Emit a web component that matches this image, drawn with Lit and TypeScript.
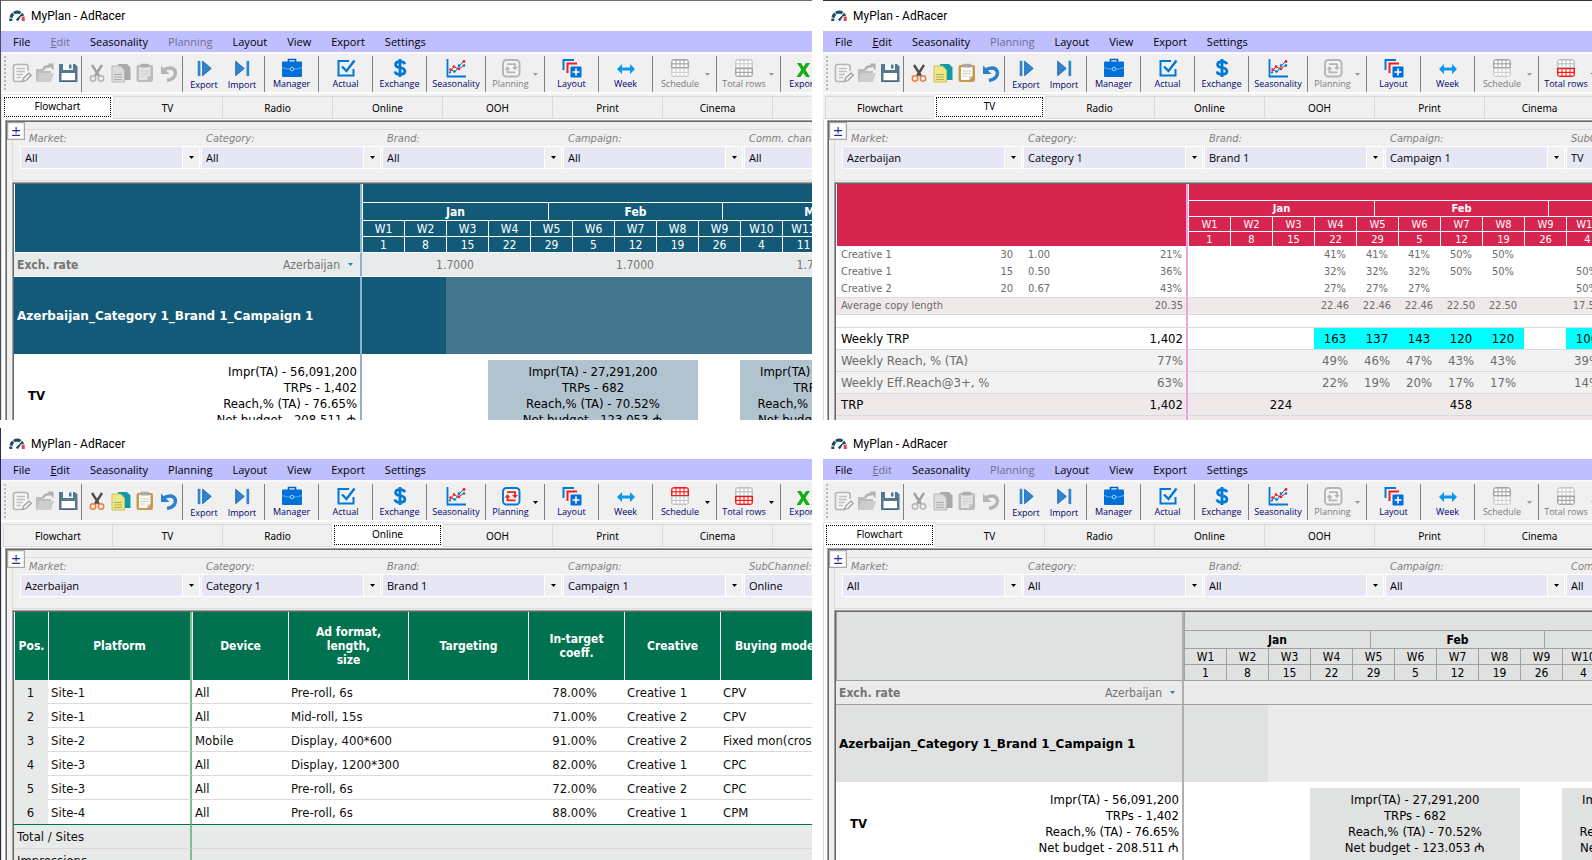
import { LitElement, html, svg, css, nothing } from "lit";
import { customElement, property } from "lit/decorators.js";
import { classMap } from "lit/directives/class-map.js";

type Grid = "flow" | "tv" | "online";

const icon = (body: unknown, size = 20) =>
  html`<svg class="ico" width=${size} height=${size} viewBox="0 0 20 20" aria-hidden="true">${body}</svg>`;

const BLUE = "#0078d7";
const RED = "#f41c1c";

const logo = html`<svg width="16" height="12" viewBox="0 0 16 12" aria-hidden="true">
  <path d="M1.800 11V8.500M2 7.600Q2.500 5.300 4.200 3.700M4.900 3.100Q6.200 2.100 8 2Q10 2 11.500 3.100M12.200 3.800Q13.200 4.700 13.700 6" fill="none" stroke="#1c4a60" stroke-width="3"/>
  <path d="M14 6.600Q14.400 8.300 14.300 11" fill="none" stroke="#e8404c" stroke-width="3"/>
  <path d="M7.300 9.600L12 5L9 10.600Z" fill="#1c4a60" stroke="#1c4a60" stroke-width="1"/>
</svg>`;

const gridGlyph = (top: string, bottom: string) => svg`
  <path d="M1 4.500Q1 1 4.500 1H15.500Q19 1 19 4.500V10H1Z" fill=${top}/>
  <path d="M1 10H19V15.500Q19 19 15.500 19H4.500Q1 19 1 15.500Z" fill=${bottom}/>
  ${[2.500, 6.500, 10.500, 14.500].map((x) => [2.600, 6.400, 11.200, 15].map((y) => svg`<rect x=${x} y=${y} width="3" height="2.600" fill="#fff"/>`))}`;

const glyph = (name: string, on: boolean): unknown => {
  const c = (color: string, grey = "#b4b4b4") => (on ? color : grey);
  switch (name) {
    case "new":
      return icon(svg`<path d="M16 8V3.500Q16 1.500 14 1.500H3.500Q1.500 1.500 1.500 3.500V16.500Q1.500 18.500 3.500 18.500H10" fill="#f6f6f6" stroke="#b4b4b4" stroke-width="1.600"/>
        <path d="M4.500 5.500H13M4.500 8.500H13M4.500 11.500H11M4.500 14.500H9" stroke="#c0c0c0" stroke-width="1.300"/>
        <path d="M10.500 18.500L11.500 15L17 10L19.300 12.300L14 17.500Z" fill="#f0f0f0" stroke="#9c9c9c" stroke-width="1.200"/>`);
    case "open":
      return icon(svg`<path d="M1 19V6H7L8.500 8H16V19Z" fill="#bdbdbd"/><path d="M1 19L4 10H19L16 19Z" fill="#cdcdcd"/>
        <path d="M8 7Q10 2.500 15 3.500" fill="none" stroke="#b0b0b0" stroke-width="2.400"/><path d="M12.500 0.500H18.500V7.500Z" fill="#b0b0b0"/>`);
    case "save":
      return icon(svg`<path d="M1 1H17L19.500 3.500V19H1Z" fill="#56788f"/><path d="M5 1H15V7H5Z" fill="#f4f7f9"/>
        <path d="M11 1.500H13.500V5.500H11Z" fill="#56788f"/><path d="M3.500 10H17V17.500H3.500Z" fill="#fff"/><path d="M3.500 17.500H17V19H3.500Z" fill="#3f5f75"/>`);
    case "cut":
      return icon(svg`<path d="M5 2L12 13M15 2L8 13" stroke=${c("#4e4e4e", "#a0a0a0")} stroke-width="2.400"/>
        <circle cx="6" cy="15.500" r="2.700" fill="none" stroke=${c("#ef7b3a", "#b4b4b4")} stroke-width="1.500"/>
        <circle cx="14" cy="15.500" r="2.700" fill="none" stroke=${c("#ef7b3a", "#b4b4b4")} stroke-width="1.500"/>`);
    case "copy":
      return icon(svg`<path d="M7 1H16L19.500 4.500V17H7Z" fill=${c("#0f9aa8", "#a9a9a9")}/>
        <path d="M1 3H9.500L13.500 7V19H1Z" fill=${c("#ede98a", "#dcdcdc")} stroke=${c("#c9c25a", "#b8b8b8")}/>
        <path d="M3 11.500H11M3 14H11M3 16.500H11" stroke=${c("#b5ae4a", "#b0b0b0")}/>`);
    case "paste":
      return icon(svg`<rect x="1.500" y="2" width="16.500" height="17" rx="2" fill=${c("#c99a4e", "#bcbcbc")}/>
        <path d="M4 4H15.500V13L12 17H4Z" fill=${c("#fbfbf6", "#e4e4e4")}/><path d="M15.500 13L12 17V13Z" fill=${c("#d8d8cc", "#c6c6c6")}/>
        <rect x="5.500" y="0.800" width="8.500" height="3.700" fill=${c("#a9a9a9", "#adadad")}/>
        <path d="M5.500 8H14M5.500 10.500H14M5.500 13H10" stroke=${c("#cfcfc4", "#cbcbcb")}/>`);
    case "undo":
      return icon(svg`<path d="M5 6.500Q15 2.500 16.500 9.500Q16.500 16 8 17.500" fill="none" stroke=${c("#2a7fd0")} stroke-width="3.400"/>
        <path d="M2 2.500V11L10.500 11Z" fill=${c("#2a7fd0")}/>`);
    case "exp":
      return icon(svg`<path d="M3 2H6V19H3Z" fill="#2f86d0"/><path d="M8.500 2.500V18.500L18 10.500Z" fill="#2f86d0" stroke="#1c64a8"/>`, 18);
    case "imp":
      return icon(svg`<path d="M15 2H18V19H15Z" fill="#2f86d0"/><path d="M3 2.500V18.500L12.500 10.500Z" fill="#2f86d0" stroke="#1c64a8"/>`, 18);
    case "manager":
      return icon(svg`<path d="M6.500 4V1.500H13.500V4" fill="none" stroke="#0063b8" stroke-width="1.600"/>
        <rect x="0" y="3.500" width="20" height="15.500" rx="1" fill="#0070d8"/>
        <path d="M0 9.500Q5 11.500 8.500 11M20 9.500Q15 11.500 11.500 11" fill="none" stroke="#5ab4f0"/><circle cx="10" cy="11" r="1.800" fill="#0070d8" stroke="#9fd6ff"/>`);
    case "actual":
      return icon(svg`<path d="M13 3H2.500V17.500H17.500V11" fill="none" stroke=${BLUE} stroke-width="2"/>
        <path d="M6 8.500L10.500 13L18.500 2.500" fill="none" stroke=${BLUE} stroke-width="2.400"/>`);
    case "dollar":
      return icon(svg`<path d="M14.700 6.200Q14.300 3.700 10 3.700Q5.600 3.700 5.600 6.700Q5.600 9 10 9.600Q14.900 10.300 14.900 13.200Q14.900 16.300 10 16.300Q5.300 16.300 5 13.300M10 1V19" fill="none" stroke=${BLUE} stroke-width="2.800"/>`);
    case "season":
      return icon(svg`<path d="M1.500 1V18.500H20" fill="none" stroke=${BLUE} stroke-width="1.800"/>
        <path d="M4 14L8 8.500L12 11L18.500 7" fill="none" stroke=${RED}/><path d="M4 11L9 14L13 8L18 3" fill="none" stroke=${BLUE}/>
        <g fill=${RED}><circle cx="4.500" cy="11.500" r="1.300"/><circle cx="8" cy="8.500" r="1.300"/><circle cx="13" cy="11" r="1.300"/><circle cx="18" cy="3.500" r="1.400"/></g>
        <g fill=${BLUE}><circle cx="8.500" cy="13.500" r="1.300"/><circle cx="13" cy="7.500" r="1.300"/><circle cx="18" cy="7.500" r="1.300"/><circle cx="4" cy="14.500" r="1.100"/></g>`);
    case "planning":
      return icon(svg`<rect x="2" y="2" width="16.500" height="16.500" rx="3.500" fill="#f4f4f4" stroke=${c(BLUE)} stroke-width="1.900"/>
        <path d="M6 6.200H14V10M14.500 14.300H6.500V10.500" fill="none" stroke=${c(RED)} stroke-width="1.800"/>
        <path d="M11 9H17L14 12.200ZM3.500 11.500H9.500L6.500 8.300Z" fill=${c(RED)}/>`);
    case "layout":
      return icon(svg`<path d="M1.500 12V2H12" fill="none" stroke=${BLUE} stroke-width="2"/><path d="M5.500 15V5.500H15" fill="none" stroke=${RED} stroke-width="2"/>
        <rect x="8.500" y="8.500" width="11" height="11" rx="1" fill="#0070d8"/><path d="M14 10.500V17.500M10.500 14H17.500" stroke="#fff" stroke-width="1.600"/>`);
    case "week":
      return icon(svg`<path d="M1 11L6 6V9.500H14V6L19 11L14 16V12.500H6V16Z" fill="#0c97ec"/>`);
    case "schedule":
      return icon(on ? gridGlyph("#f41c1c", "#c4c4c4") : gridGlyph("#a4a4a4", "#cfcfcf"));
    case "total":
      return icon(on ? gridGlyph("#bdbdbd", "#fa1414") : gridGlyph("#c8c8c8", "#a4a4a4"));
    default:
      return icon(svg`<path d="M4 5H8L10.500 9L13 5H17L12.500 11.800L17 19H13L10.300 14.800L7.500 19H3.500L8.300 11.800Z" fill="#12b012"/>`);
  }
};

const COLUMNS = ["Pos.", "Platform", "Device", "Ad format,\nlength,\nsize", "Targeting", "In-target\ncoeff.", "Creative", "Buying model"];
const WIDTHS = [34, 144, 96, 120, 120, 96, 96, 112];
const SITES = [
  ["1", "Site-1", "All", "Pre-roll, 6s", "", "78.00%", "Creative 1", "CPV"],
  ["2", "Site-1", "All", "Mid-roll, 15s", "", "71.00%", "Creative 2", "CPV"],
  ["3", "Site-2", "Mobile", "Display, 400*600", "", "91.00%", "Creative 2", "Fixed mon(cross)"],
  ["4", "Site-3", "All", "Display, 1200*300", "", "82.00%", "Creative 1", "CPC"],
  ["5", "Site-3", "All", "Pre-roll, 6s", "", "72.00%", "Creative 2", "CPC"],
  ["6", "Site-4", "All", "Pre-roll, 6s", "", "88.00%", "Creative 1", "CPM"],
];

// One column per day: weeks span 7 of them, months 31 / 29 / 31.
const WEEKS = [1, 8, 15, 22, 29, 5, 12, 19, 26, 4, 11, 18, 25];
const MONTHS: [string, number][] = [["Jan", 31], ["Feb", 29], ["Mar", 31]];

const CREATIVES = [
  ["Creative 1", "30", "1.00", "21%", ["41%", "41%", "41%", "50%", "50%", "", ""]],
  ["Creative 1", "15", "0.50", "36%", ["32%", "32%", "32%", "50%", "50%", "", "50%"]],
  ["Creative 2", "20", "0.67", "43%", ["27%", "27%", "27%", "", "", "", "50%"]],
] as [string, string, string, string, string[]][];

@customElement("plan-window")
export class PlanWindow extends LitElement {
  @property() grid: Grid = "flow";
  @property() tab = "Flowchart";
  @property() lastFilter = "Comm. channel:";
  @property({ attribute: false }) values: string[] = [];
  @property({ attribute: false }) enabled: string[] = [];
  @property({ type: Boolean }) rates = false;

  static styles = css`
    :host { display: block; min-width: 0; min-height: 0; --ui: "Open Sans", sans-serif; --sheet: "DejaVu Sans Condensed", "DejaVu Sans", sans-serif; }
    * { box-sizing: border-box; }
    button { border: 0; padding: 0; margin: 0; background: none; color: inherit; font: inherit; }
    .win { display: flex; flex-direction: column; height: 100%; overflow: hidden; border-left: 1px solid var(--edge, #fff); background: #fff; }
    .title { flex: none; display: flex; align-items: center; gap: 6px; height: 31px; padding-left: 8px; border-top: 1px solid var(--cap, #fff); font: 12px/16px Roboto, sans-serif; color: #000; }
    .menu { flex: none; display: flex; gap: 20px; height: 21px; padding-left: 12px; background: #bfbfff; font: 11px/21px var(--ui); white-space: nowrap; }
    .menu button { flex: none; height: 21px; }
    .menu button:disabled { color: #70708c; }
    .tools { flex: none; display: flex; height: 42px; padding: 2px 0 0 3px; background: #f0f0f0; border-top: 2px solid #fafafa; border-bottom: 2px solid #fcfcfc; font: 9px/12px var(--ui); color: #00006e; }
    .grip { flex: none; width: 2px; height: 34px; margin-right: 2px; background: repeating-linear-gradient(#b8b8b8 0 2px, #f0f0f0 2px 4px); }
    .group { flex: none; display: flex; height: 36px; border-left: 1px solid #808080; }
    .group:nth-child(2) { border-color: transparent; padding-left: 1px; width: 73px; }
    .group.edit { width: 101px; padding-left: 3px; }
    .group.io { width: 82px; padding-left: 2px; }
    .small { display: grid; place-items: center; width: 23px; height: 34px; }
    .edit .small { width: 24px; }
    .tool { display: flex; flex-direction: column; align-items: center; width: 53px; padding-top: 2px; white-space: nowrap; }
    .tool:disabled { color: #7c7c7c; }
    .io .tool { width: 38px; padding-top: 3px; }
    .io .tool .ico { margin-bottom: 2px; }
    .ico { display: block; flex: none; }
    .tool span { height: 12px; }
    .w58 { width: 58px; } .w49 { width: 49px; } .w54 { width: 54px; } .w44 { width: 44px; }
    .more { width: 9px; display: grid; justify-items: start; align-items: center; color: #000; }
    .w49 + .more { width: 9px; }
    .more svg { margin-left: -2px; }
    .more:disabled { color: #9a9a9a; }
    .tabs { flex: none; display: flex; align-items: flex-end; height: 25px; padding-left: 2px; background: #f0f0f0; font: 10px/14px "Noto Sans", sans-serif; }
    .tab { flex: none; width: 110px; height: 23px; border: 1px solid #d9d9d9; border-left-width: 0; padding: 0; }
    .tab:first-child { border-left-width: 1px; }
    .tab.on { height: 25px; width: 113px; margin: 0 -1px 0 -2px; padding: 2px; border: 1px solid #e4e4e4; border-bottom: 0; background: #fff; z-index: 1; }
    .tab.on span { display: block; height: 20px; padding: 1px 0 0; border: 1px dotted #000; }
    .page { flex: 1; min-height: 0; display: flex; background: #fff; border-left: 1px solid #d9d9d9; padding: 1px 0 0 3px; }
    .sunken { border: 1px solid #a0a0a0; border-width: 1px 0 0 1px; padding: 1px 0 0 1px; box-shadow: inset 1px 1px #696969; }
    .panel { flex: 1; min-width: 0; display: flex; flex-direction: column; position: relative; background: #f0f0f0; }
    .toggle { position: absolute; left: 1px; top: 1px; width: 18px; height: 18px; border: 1px solid #a8a8a8; box-shadow: inset 0 0 0 1px #e8e8e8; background: #fff; color: #2a2a90; font: 14px/14px var(--sheet); z-index: 1; }
    .filters { flex: none; display: flex; gap: 1px; height: 52px; margin: 7px 0 1px 5px; padding: 2px 0 0 7px; border: 1px solid #dcdcdc; border-right: 0; }
    .field { flex: none; width: 180px; }
    .field label { display: block; height: 14px; padding-left: 5px; font: italic 11px/14px var(--sheet); color: #808080; white-space: nowrap; }
    .field:first-child label { padding-left: 9px; }
    .pick { display: flex; height: 23px; border: 1px solid #fff; background: #e6e6f5; position: relative; }
    .pick select { appearance: none; flex: 1; min-width: 0; border: 0; border-radius: 0; margin: 0; padding: 0 16px 0 4px; background: none; font: 11px/20px var(--ui); color: #000; }
    .pick svg { position: absolute; right: 0; top: 0; pointer-events: none; }
    .sheet { flex: 1; min-height: 0; margin-left: 5px; overflow: hidden; background: #fff; font: 12px/14px var(--sheet); }
    table { table-layout: fixed; width: 1px; border-collapse: separate; border-spacing: 0; white-space: nowrap; }
    td, th { padding: 0; overflow: hidden; font-weight: normal; text-align: center; vertical-align: middle; }
    thead th { background: var(--head); color: var(--headtext); border: 0 solid var(--line); border-left-width: 1px; border-bottom-width: 1px; }
    .month { font-weight: bold; }
    .flow thead tr:nth-child(n + 3) th { padding-top: 1px; }
    .split, thead th.corner { border-right: 2px solid var(--split); }
    .teal { --head: #125a78; --headtext: #fff; --line: #fff; --split: #8fb0d0; --rate: #e8ebeb; --rest: #42768d; --box: #b1c3cf; }
    .grey { --head: #e0e2e1; --headtext: #000; --line: #a0a0a0; --split: #b0b0b0; --rate: #ebebeb; --rest: #ebebeb; --box: #e0e2e1; }
    .pink { --head: #d62650; --headtext: #fff; --line: #fff; --split: #f0a0e0; }
    .green { --head: #007250; --headtext: #fff; --line: #fff; --split: #7cbf8c; }
    .h22 { height: 22px; } .h19 { height: 19px; } .h18 { height: 18px; } .h17 { height: 17px; } .h16 { height: 16px; } .h15 { height: 15px; } .h14 { height: 14px; } .h13 { height: 13px; } .h24 { height: 24px; }
    .flow tr.rate { height: 24px; }
    .rate td, .rate th { background: var(--rate); color: #747474; border-bottom: 1px solid var(--line); }
    .pair { display: flex; justify-content: space-between; align-items: center; padding: 0 7px 0 3px; }
    .pair .market { display: flex; align-items: center; gap: 8px; }
    .camp { height: 77px; }
    .camp th, .camp td { background: var(--head); color: var(--headtext); text-align: left; padding-left: 3px; font: bold 12px/16px "DejaVu Sans", sans-serif; }
    .camp td.rest { background: var(--rest); }
    .media { height: 83px; font: 13px/16px var(--sheet); color: #000; }
    .media td { vertical-align: top; padding-top: 10px; }
    .media .sum { display: flex; justify-content: space-between; padding: 0 3px 0 14px; text-align: right; }
    .media .sum b { align-self: center; line-height: 18px; }
    .media td.box { border-top: 6px solid #fff; background: var(--box); padding-top: 4px; }
    .tv { font-size: 11px; line-height: 13px; }
    .tv thead tr:last-child th, .tv thead th.corner { border-bottom-width: 0; }
    .tv tbody { color: #6c6c6c; }
    .tv tbody td, .tv tbody th { border-bottom: 1px solid #dadada; }
    .tv .bare td, .tv .bare th { border-bottom: 0; }
    .tv .tint { background: #f0e9e9; }
    .tv .high td, .tv .high th { padding-bottom: 2px; }
    .tv .pale { background: #f2f2f2; }
    .tv .big { font-size: 13px; line-height: 16px; }
    .tv .dark { color: #000; }
    .creative { display: grid; grid-template-columns: 1fr 60px 37px 132px; padding: 0 4px 0 5px; text-align: right; }
    .creative span:first-child, .two span:first-child { text-align: left; }
    .two { display: flex; justify-content: space-between; padding: 0 3px 0 5px; }
    .tv td.hot { background: #00ffff; }
    .online thead th { font: bold 12px/14px var(--sheet); height: 68px; white-space: pre-line; border-bottom: 0; }
    .online thead th.split { border-right: 2px solid var(--split); }
    .online tbody { font-size: 13px; line-height: 16px; color: #101010; }
    .online tbody td { border-bottom: 1px solid #dadada; text-align: left; padding: 2px 0 0 3px; }
    .online tbody td.pos { background: #e8eaea; border-bottom-color: #e8eaea; text-align: center; padding: 2px 1px 0 0; }
    .online tbody td.mid { text-align: center; padding: 2px 3px 0 0; }
    .online tbody tr.last td { height: 25px; border-bottom-color: #007250; }
    .online .sumrow td, .online .sumrow th { background: #e8eaea; border-bottom: 1px solid #dadada; text-align: left; padding: 1px 0 0 3px; }
    .online .sumrow th { border-right: 2px solid var(--split); }
  `;

  private on(name: string) {
    return this.enabled.includes(name);
  }

  private small(name: string, label: string, on: boolean) {
    return html`<button class="small" aria-label=${label} ?disabled=${!on}>${glyph(name, on)}</button>`;
  }

  private tool(name: string, label: string, on = true, width = "", more = false) {
    return html`<div class="group">
      <button class="tool ${width}" ?disabled=${!on}>${glyph(name, on)}<span>${label}</span></button>
      ${more
        ? html`<button class="more" aria-label="${label} options" ?disabled=${!on}><svg width="5" height="3" viewBox="0 0 5 3"><path d="M0 0H5L2.500 3Z" fill="currentColor"/></svg></button>`
        : nothing}
    </div>`;
  }

  private timeline(heights: number[]) {
    return html`<thead>
      <tr class="h${heights[0]}"><th class="corner" rowspan="4"></th><th colspan="91"></th></tr>
      <tr class="h${heights[1]}">${MONTHS.map(([name, days]) => html`<th class="month" colspan=${days}>${name}</th>`)}</tr>
      <tr class="h${heights[2]}">${WEEKS.map((_, i) => html`<th colspan="7">W${i + 1}</th>`)}</tr>
      <tr class="h${heights[3]}">${WEEKS.map((d) => html`<th colspan="7">${d}</th>`)}</tr>
    </thead>`;
  }

  private days(lead: number) {
    return html`<colgroup><col style="width:${lead}px">${Array.from({ length: 91 }, () => html`<col style="width:6px">`)}</colgroup>`;
  }

  private figures(impr: string, trps: string, reach: string, budget: string) {
    return html`<div>Impr(TA) - ${impr}<br>TRPs - ${trps}<br>Reach,% (TA) - ${reach}<br>Net budget - ${budget} ₼</div>`;
  }

  private flow() {
    return html`<table class="flow">${this.days(348)}${this.timeline([19, 18, 16, 16])}
      <tbody>
        <tr class="rate"><th class="split"><div class="pair"><b>Exch. rate</b><span class="market">Azerbaijan
          <svg width="5" height="3" viewBox="0 0 5 3" aria-hidden="true"><path d="M0 0H5L2.500 3Z" fill="#2a7ab8"/></svg></span></div></th>
          ${MONTHS.map(([, days]) => html`<td colspan=${days}>${this.rates ? "1.7000" : ""}</td>`)}</tr>
        <tr class="camp"><th class="split">Azerbaijan_Category 1_Brand 1_Campaign 1</th><td colspan="14"></td><td class="rest" colspan="77"></td></tr>
        <tr class="media"><td class="split"><div class="sum"><b>TV</b>${this.figures("56,091,200", "1,402", "76.65%", "208.511")}</div></td>
          <td colspan="21"></td>
          <td class="box" colspan="35">${this.figures("27,291,200", "682", "70.52%", "123.053")}</td>
          <td colspan="7"></td>
          <td class="box" colspan="28">${this.figures("28,800,000", "720", "68.14%", "85.458")}</td></tr>
      </tbody></table>`;
  }

  private weekly(label: string, total: string, cells: string[], cls: string, hot = false) {
    return html`<tr class=${cls}><th class="split"><div class="two"><span>${label}</span><span>${total}</span></div></th>
      <td colspan="21"></td>${cells.map((v) => html`<td class=${hot && v ? "hot" : ""} colspan="7">${v}</td>`)}<td colspan="21"></td></tr>`;
  }

  private tv() {
    return html`<table class="tv">${this.days(352)}${this.timeline([17, 16, 15, 14])}
      <tbody>
        ${CREATIVES.map(([name, len, k, share, cells], i) => html`<tr class=${i < 2 ? "bare h17" : "h18"}>
          <th class="split"><div class="creative"><span>${name}</span><span>${len}</span><span>${k}</span><span>${share}</span></div></th>
          <td colspan="21"></td>${cells.map((v) => html`<td colspan="7">${v}</td>`)}<td colspan="21"></td></tr>`)}
        ${this.weekly("Average copy length", "20.35", ["22.46", "22.46", "22.46", "22.50", "22.50", "", "17.50"], "h17 tint high")}
        <tr class="h13"><td class="split"></td><td colspan="91"></td></tr>
        ${this.weekly("Weekly TRP", "1,402", ["163", "137", "143", "120", "120", "", "106"], "h22 big dark", true)}
        ${this.weekly("Weekly Reach, % (TA)", "77%", ["49%", "46%", "47%", "43%", "43%", "", "39%"], "h22 big pale")}
        ${this.weekly("Weekly Eff.Reach@3+, %", "63%", ["22%", "19%", "20%", "17%", "17%", "", "14%"], "h22 big pale")}
        <tr class="h22 big dark tint"><th class="split"><div class="two"><span>TRP</span><span>1,402</span></div></th>
          <td colspan="31">224</td><td colspan="29">458</td><td colspan="31"></td></tr>
        <tr class="h22 tint"><td class="split"></td><td colspan="91"></td></tr>
      </tbody></table>`;
  }

  private online() {
    const cls = (i: number) => (i === 0 ? "pos" : i === 1 ? "split" : i === 5 ? "mid" : "");
    return html`<table class="online"><colgroup>${WIDTHS.map((w) => html`<col style="width:${w}px">`)}</colgroup>
      <thead><tr>${COLUMNS.map((c, i) => html`<th class=${i === 1 ? "split" : ""}>${c}</th>`)}</tr></thead>
      <tbody>
        ${SITES.map((row, r) => html`<tr class=${r === 5 ? "last" : "h24"}>${row.map((v, i) => html`<td class=${cls(i)}>${v}</td>`)}</tr>`)}
        ${["Total / Sites", "Impressions"].map((t) => html`<tr class="h24 sumrow"><th colspan="2">${t}</th><td colspan="6"></td></tr>`)}
      </tbody></table>`;
  }

  render() {
    const edit = this.on("edit");
    const names = ["Market:", "Category:", "Brand:", "Campaign:", this.lastFilter];
    const theme = this.grid === "tv" ? "pink" : this.grid === "online" ? "green" : this.rates ? "teal" : "grey";
    return html`<div class="win">
      <header class="title">${logo}<span>MyPlan - AdRacer</span></header>
      <nav class="menu">
        <button>File</button><button ?disabled=${!edit}><u>E</u>dit</button><button>Seasonality</button>
        <button ?disabled=${!this.on("planning")}>Planning</button><button>Layout</button><button>View</button>
        <button>Export</button><button>Settings</button>
      </nav>
      <div class="tools" role="toolbar">
        <div class="grip"></div>
        <div class="group">${this.small("new", "New", false)}${this.small("open", "Open", false)}${this.small("save", "Save", true)}</div>
        <div class="group edit">${this.small("cut", "Cut", edit)}${this.small("copy", "Copy", edit)}${this.small("paste", "Paste", edit)}${this.small("undo", "Undo", edit)}</div>
        <div class="group io"><button class="tool">${glyph("exp", true)}<span>Export</span></button><button class="tool">${glyph("imp", true)}<span>Import</span></button></div>
        ${this.tool("manager", "Manager")}${this.tool("actual", "Actual")}${this.tool("dollar", "Exchange")}
        ${this.tool("season", "Seasonality", true, "w58")}
        ${this.tool("planning", "Planning", this.on("planning"), "w49", true)}
        ${this.tool("layout", "Layout")}${this.tool("week", "Week")}
        ${this.tool("schedule", "Schedule", this.on("schedule"), "w54", true)}
        ${this.tool("total", "Total rows", this.on("total"), "w54", true)}
        ${this.tool("excel", "Export", true, "w44")}
      </div>
      <div class="tabs" role="tablist">
        ${["Flowchart", "TV", "Radio", "Online", "OOH", "Print", "Cinema", "Other"].map((t) => html`
          <button role="tab" aria-selected=${t === this.tab ? "true" : "false"} class=${classMap({ tab: true, on: t === this.tab })}><span>${t}</span></button>`)}
      </div>
      <div class="page"><div class="panel sunken">
        <button class="toggle" aria-label="Toggle filters">±</button>
        <div class="filters">
          ${names.map((n, i) => html`<div class="field"><label for="f${i}">${n}</label>
            <div class="pick"><select id="f${i}"><option>${this.values[i]}</option></select>
              <svg width="17" height="21" viewBox="0 0 17 21" aria-hidden="true"><path d="M0 0H17V21H0Z" fill="#f0f0f0"/><path d="M0 0H1V21H0Z" fill="#fff"/><path d="M7 9H12L9.500 12Z" fill="#000"/></svg></div></div>`)}
        </div>
        <div class="sheet sunken ${theme}">${this.grid === "tv" ? this.tv() : this.grid === "online" ? this.online() : this.flow()}</div>
      </div></div>
    </div>`;
  }
}

@customElement("app-root")
export class AppRoot extends LitElement {
  static styles = css`
    :host { display: block; height: 100vh; background: #fff; overflow: hidden; }
    .wall { display: grid; height: 100%; grid-template-columns: minmax(0, 812fr) minmax(0, 770fr); grid-template-rows: minmax(0, 420fr) minmax(0, 432fr); gap: 8px 10px; }
    .tl { --edge: #465264; --cap: #6f6f6f; }
    .tr { --cap: #333; }
    .bl { --edge: #2a2c48; }
  `;

  render() {
    const all = ["All", "All", "All", "All", "All"];
    const picked = (channel: string) => ["Azerbaijan", "Category 1", "Brand 1", "Campaign 1", channel];
    return html`<main class="wall">
      <plan-window class="tl" rates .values=${all}></plan-window>
      <plan-window class="tr" grid="tv" tab="TV" lastFilter="SubChannel:" .values=${picked("TV")} .enabled=${["edit", "total"]}></plan-window>
      <plan-window class="bl" grid="online" tab="Online" lastFilter="SubChannel:" .values=${picked("Online")} .enabled=${["edit", "planning", "schedule", "total"]}></plan-window>
      <plan-window class="br" .values=${all}></plan-window>
    </main>`;
  }
}
